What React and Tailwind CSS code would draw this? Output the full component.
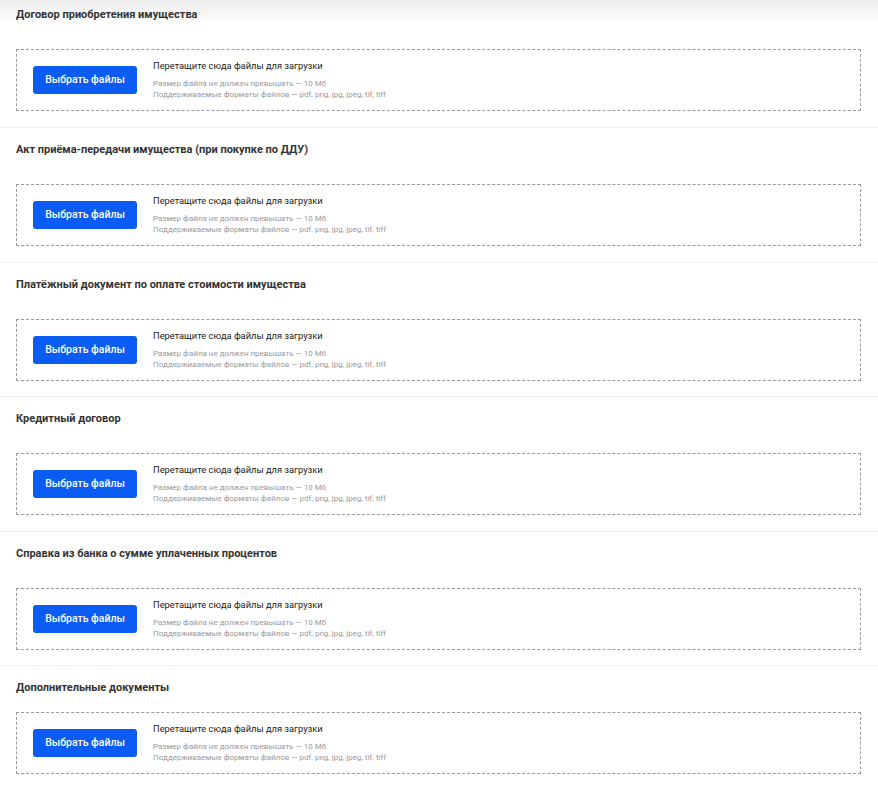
import React from "react";

const sections = [
  "Договор приобретения имущества",
  "Акт приёма-передачи имущества (при покупке по ДДУ)",
  "Платёжный документ по оплате стоимости имущества",
  "Кредитный договор",
  "Справка из банка о сумме уплаченных процентов",
  "Дополнительные документы",
];

const DropZone = () => (
  <div className="ml-4 mr-[17px] h-[62px] border border-dashed border-[#9a9a9a] flex items-center pl-4">
    <button className="w-[104px] h-[28px] rounded-[3px] bg-[#0a5cf2] text-white text-[10.5px] font-medium leading-none">
      Выбрать файлы
    </button>
    <div className="ml-4 flex flex-col">
      <span className="text-[9.3px] leading-[12px] text-[#222]">
        Перетащите сюда файлы для загрузки
      </span>
      <span className="mt-[6px] text-[8px] leading-[11px] text-[#9a9a9a]">
        Размер файла не должен превышать — 10 Мб
      </span>
      <span className="text-[8px] leading-[11px] text-[#9a9a9a]">
        Поддерживаемые форматы файлов — pdf, png, jpg, jpeg, tif, tiff
      </span>
    </div>
  </div>
);

export default function App() {
  return (
    <div
      className="min-h-[787px] bg-white"
      style={{ fontFamily: "Roboto, 'Noto Sans', sans-serif" }}
    >
      {sections.map((title, i) => {
        const first = i === 0;
        const last = i === sections.length - 1;
        const tight = i === 2 || i === 4;
        return (
          <section
            key={title}
            className={
              first
                ? "pt-[7px] pb-4 border-b border-[#ededed] bg-[linear-gradient(to_bottom,#ececec_0px,#ffffff_24px)]"
                : last
                ? "pt-[14px] pb-[13px]"
                : tight
                ? "pt-[14px] pb-[15px] border-b border-[#ededed]"
                : "pt-[14px] pb-4 border-b border-[#ededed]"
            }
          >
            <h2
              className={`px-4 text-[11px] leading-4 font-bold text-[#333] ${
                last ? "mb-4" : "mb-[26px]"
              }`}
            >
              {title}
            </h2>
            <DropZone />
          </section>
        );
      })}
    </div>
  );
}
